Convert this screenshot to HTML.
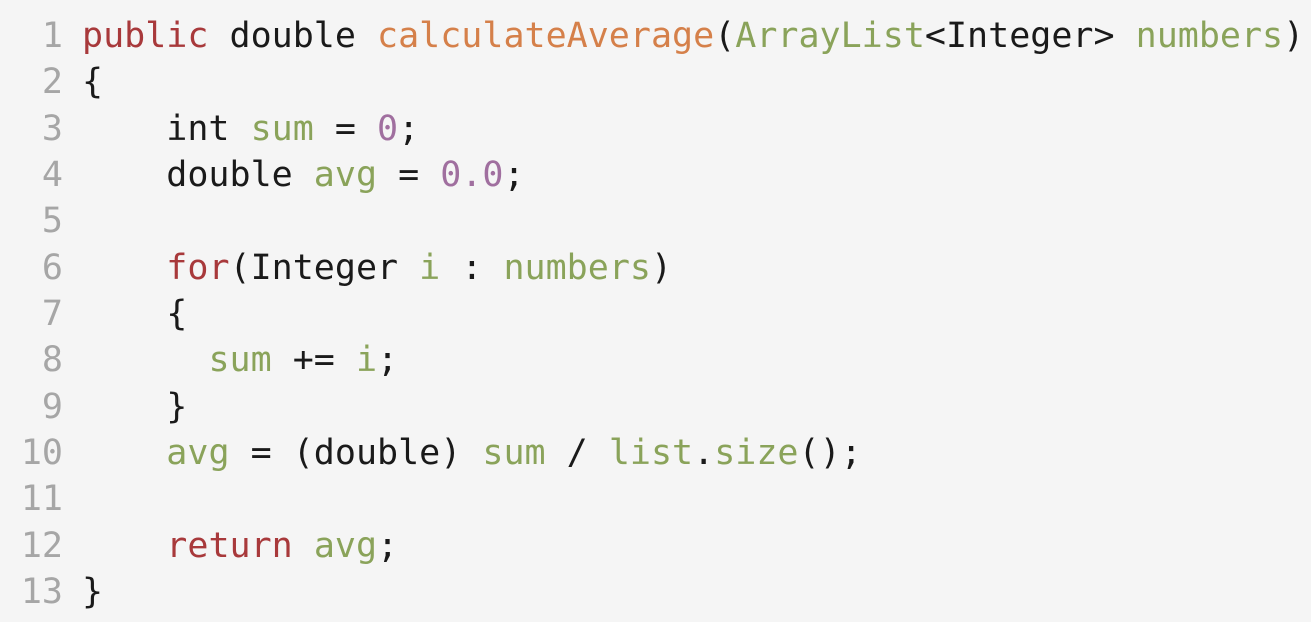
<!DOCTYPE html>
<html><head><style>
html,body{margin:0;padding:0;background:#f5f5f5;width:1311px;height:622px;overflow:hidden}
pre{margin:0;position:absolute;top:13px;left:0;font-family:"DejaVu Sans Mono",monospace;font-size:35px;line-height:46.33px;color:#1a1a1a}
.n{display:inline-block;width:63px;text-align:right;color:#a6a6a6;margin-right:19px}
.k{color:#a8393b}.f{color:#d5804a}.g{color:#8aa35a}.p{color:#a06f9f}
</style></head><body><pre><span class="n">1</span><span class="k">public</span> double <span class="f">calculateAverage</span>(<span class="g">ArrayList</span>&lt;Integer&gt; <span class="g">numbers</span>)
<span class="n">2</span>{
<span class="n">3</span>    int <span class="g">sum</span> = <span class="p">0</span>;
<span class="n">4</span>    double <span class="g">avg</span> = <span class="p">0.0</span>;
<span class="n">5</span>
<span class="n">6</span>    <span class="k">for</span>(Integer <span class="g">i</span> : <span class="g">numbers</span>)
<span class="n">7</span>    {
<span class="n">8</span>      <span class="g">sum</span> += <span class="g">i</span>;
<span class="n">9</span>    }
<span class="n">10</span>    <span class="g">avg</span> = (double) <span class="g">sum</span> / <span class="g">list</span>.<span class="g">size</span>();
<span class="n">11</span>
<span class="n">12</span>    <span class="k">return</span> <span class="g">avg</span>;
<span class="n">13</span>}</pre></body></html>
